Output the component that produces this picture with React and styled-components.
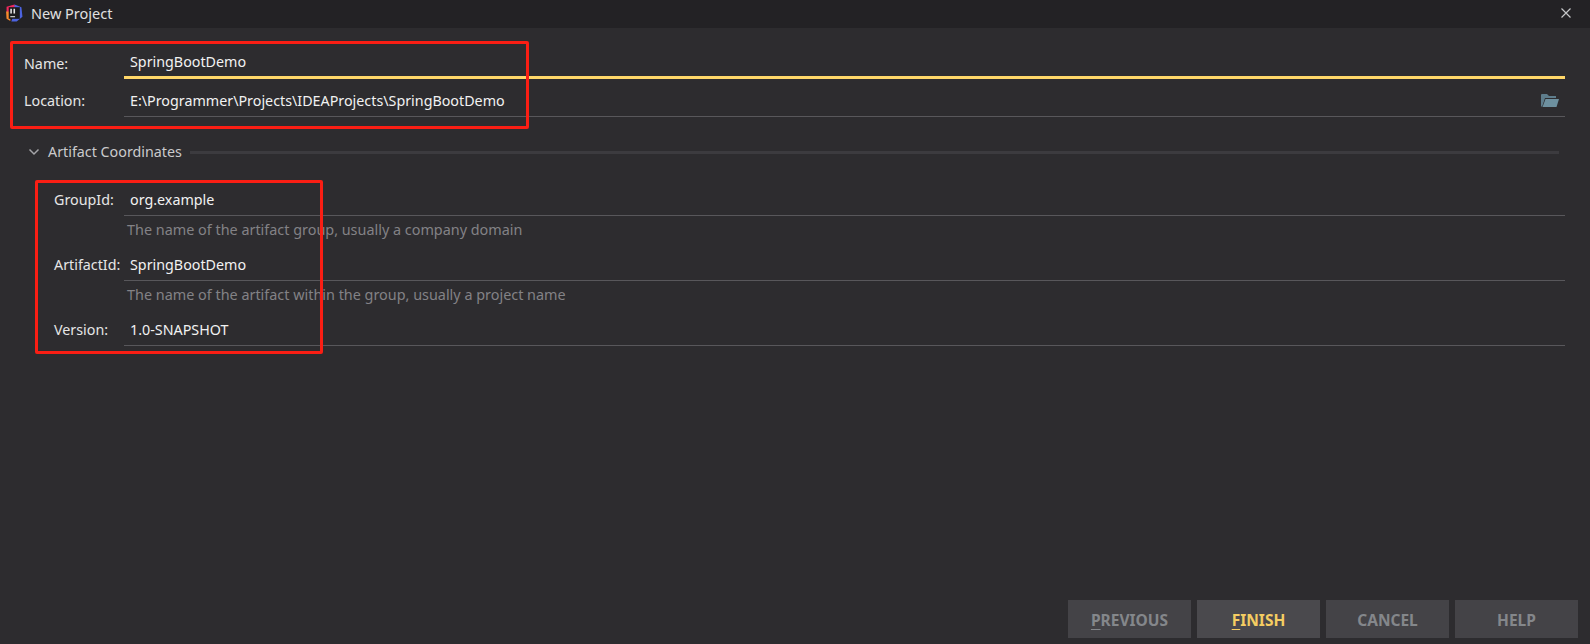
import styled, { createGlobalStyle } from 'styled-components';

const GlobalStyle = createGlobalStyle`
  html, body {
    margin: 0;
    padding: 0;
    background: #2d2c2f;
  }
`;

const Dialog = styled.div`
  position: relative;
  display: flex;
  flex-direction: column;
  width: 1590px;
  height: 644px;
  overflow: hidden;
  background: #2d2c2f;
  color: #e6e6e6;
  font-family: "Noto Sans", "Open Sans", sans-serif;
  font-size: 14.3px;
`;

const TitleBar = styled.header`
  display: flex;
  align-items: center;
  flex: none;
  height: 28px;
  padding: 0 19px 2px 5px;
  box-sizing: border-box;
  background: #232225;
  font-size: 14.5px;
  color: #e0e0e0;
`;

const TitleText = styled.span`
  margin-left: 8px;
  flex: 1;
`;

const Form = styled.main`
  display: flex;
  flex-direction: column;
  padding: 20px 25px 0 0;
`;

const Row = styled.div`
  display: grid;
  grid-template-columns: ${(p) => (p.$nested ? '70px' : '100px')} 1fr;
  align-items: center;
  padding-left: ${(p) => (p.$nested ? '54px' : '24px')};
  margin-bottom: ${(p) => p.$after || 0}px;
`;

const Label = styled.label`
  color: #e6e6e6;
  padding-bottom: ${(p) => (p.$focused ? 1 : 3)}px;
`;

const Field = styled.div`
  display: flex;
  align-items: center;
  justify-content: space-between;
  height: ${(p) => (p.$focused ? 31 : 30)}px;
  box-sizing: border-box;
  padding: ${(p) => (p.$focused ? '0 6px 2px 6px' : '0 6px 2px 6px')};
  border-bottom: ${(p) => (p.$focused ? '3px solid #ffd769' : '1px solid #58575b')};
  color: #f2f2f2;
`;

const Hint = styled.div`
  height: 35px;
  padding: 4px 0 0 127px;
  box-sizing: border-box;
  font-size: 14.4px;
  color: #838286;
  line-height: 20px;
`;

const SectionHeader = styled.div`
  display: flex;
  align-items: center;
  gap: 8px;
  height: 18px;
  margin: 26px 6px 25px 28px;
  color: #cacacc;
`;

const SectionTitle = styled.span`
  padding-bottom: 2px;
`;

const SectionLine = styled.div`
  flex: 1;
  height: 3px;
  background: #3c3b3f;
`;

const Footer = styled.footer`
  display: flex;
  justify-content: flex-end;
  gap: 6px;
  margin-top: auto;
  padding: 0 12px 6px 0;
`;

const Button = styled.button`
  width: 123px;
  height: 38px;
  padding: 1px 0 0;
  border: none;
  font-family: inherit;
  font-size: 15.5px;
  font-weight: 700;
  background: ${(p) => (p.$primary ? '#4a494d' : '#444347')};
  color: ${(p) => (p.$primary ? '#f5cd62' : '#84878b')};

  u {
    text-underline-offset: 3px;
  }
`;

const Annotation = styled.div`
  position: absolute;
  left: ${(p) => p.$x}px;
  top: ${(p) => p.$y}px;
  width: ${(p) => p.$w}px;
  height: ${(p) => p.$h}px;
  box-sizing: border-box;
  border: 3px solid #fa1e14;
  border-radius: 2px;
  pointer-events: none;
`;

const AppLogo = () => (
  <svg width="18" height="18" viewBox="0 0 17 17">
    <path d="M1.5 2.5 L9 0.5 L10.5 6 L1.5 8 Z" fill="#f0295f" />
    <path d="M1 7 L5 7 L5 16 L1.5 14 Z" fill="#f78a2d" />
    <path d="M9 0.5 L15.5 3 L16.5 12 L11 16.5 L6 16.5 L9 8 Z" fill="#4c63e0" />
    <rect x="3.5" y="3" width="10.5" height="11" fill="#1b1b1d" />
    <rect x="5" y="4.5" width="1.5" height="4.5" fill="#e4e4e4" />
    <rect x="8" y="4.5" width="1.5" height="4.5" fill="#e4e4e4" />
    <rect x="5" y="11.5" width="4.5" height="1" fill="#e4e4e4" />
  </svg>
);

const CloseIcon = () => (
  <svg width="10" height="10" viewBox="0 0 10 10">
    <path d="M0.5 0.5 L9.5 9.5 M9.5 0.5 L0.5 9.5" stroke="#c4c6c8" strokeWidth="1.2" fill="none" />
  </svg>
);

const FolderIcon = () => (
  <svg width="18" height="15" viewBox="0 0 18 15">
    <path d="M0 2 Q0 1 1 1 L6 1 L8 3 L15 3 L15 5 L4 5 L1 14 L0 13 Z" fill="#5e7d8c" />
    <path d="M4.5 6 L18 6 L15.5 14 L1.5 14 Z" fill="#6d909f" />
  </svg>
);

const Chevron = () => (
  <svg width="12" height="12" viewBox="0 0 12 12">
    <path d="M1.5 3.5 L6 8 L10.5 3.5" stroke="#a4a4a8" strokeWidth="1.5" fill="none" />
  </svg>
);

const App = () => {
  return (
    <Dialog>
      <GlobalStyle />
      <TitleBar>
        <AppLogo />
        <TitleText>New Project</TitleText>
        <CloseIcon />
      </TitleBar>

      <Form>
        <Row $after={8}>
          <Label $focused>Name:</Label>
          <Field $focused>SpringBootDemo</Field>
        </Row>
        <Row>
          <Label>Location:</Label>
          <Field>
            E:\Programmer\Projects\IDEAProjects\SpringBootDemo
            <FolderIcon />
          </Field>
        </Row>

        <SectionHeader>
          <Chevron />
          <SectionTitle>Artifact Coordinates</SectionTitle>
          <SectionLine />
        </SectionHeader>

        <Row $nested>
          <Label>GroupId:</Label>
          <Field>org.example</Field>
        </Row>
        <Hint>The name of the artifact group, usually a company domain</Hint>
        <Row $nested>
          <Label>ArtifactId:</Label>
          <Field>SpringBootDemo</Field>
        </Row>
        <Hint>The name of the artifact within the group, usually a project name</Hint>
        <Row $nested>
          <Label>Version:</Label>
          <Field>1.0-SNAPSHOT</Field>
        </Row>
      </Form>

      <Footer>
        <Button><u>P</u>REVIOUS</Button>
        <Button $primary><u>F</u>INISH</Button>
        <Button>CANCEL</Button>
        <Button>HELP</Button>
      </Footer>

      <Annotation $x={10} $y={41} $w={519} $h={88} />
      <Annotation $x={35} $y={180} $w={288} $h={174} />
    </Dialog>
  );
};

export default App;
